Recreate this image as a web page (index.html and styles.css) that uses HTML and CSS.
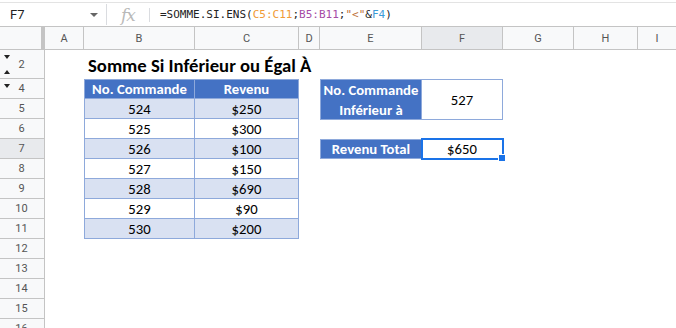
FILE: index.html
```html
<!DOCTYPE html>
<html lang="fr">
<head>
  <meta charset="UTF-8">
  <title>Somme Si Inférieur ou Égal À</title>
  <link rel="stylesheet" href="styles.css">
</head>
<body>
  <div class="toolbar">
    <div class="namebox">F7</div>
    <span class="caret"></span>
    <span class="sep tall"></span>
    <span class="fx">fx</span>
    <span class="sep"></span>
    <div class="formula">=SOMME.SI.ENS(<span class="r1">C5:C11</span>;<span class="r2">B5:B11</span>;<span class="str">"&lt;"</span>&amp;<span class="r3">F4</span>)</div>
  </div>

  <div class="sheet">
    <!-- column headers -->
    <div class="corner"></div>
    <div class="colhead">A</div>
    <div class="colhead">B</div>
    <div class="colhead">C</div>
    <div class="colhead">D</div>
    <div class="colhead">E</div>
    <div class="colhead active">F</div>
    <div class="colhead">G</div>
    <div class="colhead">H</div>
    <div class="colhead last">I</div>

    <!-- row 2 -->
    <div class="rowhead"><span class="arrow down top"></span>2<span class="arrow up bottom"></span></div>
    <div class="cell"></div>
    <div class="cell title">Somme Si Inférieur ou Égal À</div>
    <div class="cell"></div><div class="cell"></div><div class="cell"></div>
    <div class="cell"></div><div class="cell"></div><div class="cell"></div><div class="cell"></div>

    <!-- row 4 -->
    <div class="rowhead"><span class="arrow down top"></span>4</div>
    <div class="cell"></div>
    <div class="cell th first top">No. Commande</div>
    <div class="cell th top">Revenu</div>
    <div class="cell"></div>
    <div class="cell th box merged">No. Commande<br>Inférieur à</div>
    <div class="cell box merged value">527</div>
    <div class="cell"></div><div class="cell"></div><div class="cell"></div>

    <!-- row 5 -->
    <div class="rowhead">5</div>
    <div class="cell"></div>
    <div class="cell td first alt">524</div>
    <div class="cell td alt">$250</div>
    <div class="cell"></div>
    <div class="cell"></div><div class="cell"></div><div class="cell"></div>

    <!-- row 6 -->
    <div class="rowhead">6</div>
    <div class="cell"></div>
    <div class="cell td first">525</div>
    <div class="cell td">$300</div>
    <div class="cell"></div><div class="cell"></div><div class="cell"></div>
    <div class="cell"></div><div class="cell"></div><div class="cell"></div>

    <!-- row 7 -->
    <div class="rowhead active">7</div>
    <div class="cell"></div>
    <div class="cell td first alt">526</div>
    <div class="cell td alt">$100</div>
    <div class="cell"></div>
    <div class="cell th box">Revenu Total</div>
    <div class="cell box value selected">$650</div>
    <div class="cell"></div><div class="cell"></div><div class="cell"></div>

    <!-- row 8 -->
    <div class="rowhead">8</div>
    <div class="cell"></div>
    <div class="cell td first">527</div>
    <div class="cell td">$150</div>
    <div class="cell"></div><div class="cell"></div><div class="cell"></div>
    <div class="cell"></div><div class="cell"></div><div class="cell"></div>

    <!-- row 9 -->
    <div class="rowhead">9</div>
    <div class="cell"></div>
    <div class="cell td first alt">528</div>
    <div class="cell td alt">$690</div>
    <div class="cell"></div><div class="cell"></div><div class="cell"></div>
    <div class="cell"></div><div class="cell"></div><div class="cell"></div>

    <!-- row 10 -->
    <div class="rowhead">10</div>
    <div class="cell"></div>
    <div class="cell td first">529</div>
    <div class="cell td">$90</div>
    <div class="cell"></div><div class="cell"></div><div class="cell"></div>
    <div class="cell"></div><div class="cell"></div><div class="cell"></div>

    <!-- row 11 -->
    <div class="rowhead">11</div>
    <div class="cell"></div>
    <div class="cell td first alt">530</div>
    <div class="cell td alt">$200</div>
    <div class="cell"></div><div class="cell"></div><div class="cell"></div>
    <div class="cell"></div><div class="cell"></div><div class="cell"></div>

    <div class="rowhead">12</div><div class="blank"></div>
    <div class="rowhead">13</div><div class="blank"></div>
    <div class="rowhead">14</div><div class="blank"></div>
    <div class="rowhead">15</div><div class="blank"></div>
    <div class="rowhead">16</div><div class="blank"></div>
  </div>
</body>
</html>
```

FILE: styles.css
```css
body {
  margin: 0;
  background: #fff;
  font-family: Roboto, Arial, sans-serif;
  overflow: hidden;
}
.toolbar {
  display: flex;
  align-items: center;
  height: 23px;
  margin-top: 2px;
  border-top: 1px solid #e3e3e3;
}
.namebox {
  width: 80px;
  padding-left: 10px;
  font-size: 13px;
  color: #222;
}
.caret {
  width: 0;
  height: 0;
  border-left: 4px solid transparent;
  border-right: 4px solid transparent;
  border-top: 4px solid #666;
  margin-left: 0;
  margin-right: 8px;
}
.sep {
  width: 1px;
  height: 14px;
  background: #dadce0;
}
.sep.tall {
  height: 21px;
}
.fx {
  width: 42px;
  text-align: center;
  font-family: "DejaVu Serif", serif;
  font-style: italic;
  font-size: 17px;
  color: #b9b9b9;
  letter-spacing: -1px;
}
.formula {
  padding-left: 10px;
  font-family: "DejaVu Sans Mono", monospace;
  font-size: 11px;
  color: #222;
}
.r1 { color: #f09a36; }
.r2 { color: #a64ca6; }
.str { color: #c0713a; }
.r3 { color: #3b9bd8; }

.sheet {
  display: grid;
  grid-template-columns: 45px 39px 111px 104px 21px 102px 81px 71px 64px 1fr;
  grid-template-rows: 24px 29px repeat(14, 20px);
}
.corner {
  background: #f8f9fa;
  border-top: 1px solid #c4c4c4;
  border-bottom: 1px solid #c4c4c4;
  border-right: 4px solid #c4c4c4;
}
.colhead {
  display: flex;
  align-items: center;
  justify-content: center;
  background: #f8f9fa;
  border-top: 1px solid #c4c4c4;
  border-bottom: 1px solid #c4c4c4;
  border-right: 1px solid #c4c4c4;
  font-size: 11px;
  color: #555;
}
.colhead.last {
  border-right: none;
}
.colhead.active,
.rowhead.active {
  background: #e8eaed;
}
.rowhead {
  position: relative;
  display: flex;
  align-items: center;
  justify-content: center;
  padding-right: 1px;
  background: #f8f9fa;
  border-right: 1px solid #c4c4c4;
  border-bottom: 1px solid #c4c4c4;
  font-size: 11px;
  color: #555;
}
.arrow {
  position: absolute;
  left: 4px;
  width: 0;
  height: 0;
  border-left: 3px solid transparent;
  border-right: 3px solid transparent;
}
.arrow.down {
  border-top: 4px solid #222;
}
.arrow.up {
  border-bottom: 4px solid #222;
}
.arrow.top { top: 5px; }
.arrow.bottom { bottom: 4px; }

.blank {
  grid-column: 2 / -1;
}
.cell {
  display: flex;
  align-items: center;
  justify-content: center;
  font-family: Carlito, Lato, "Liberation Sans", sans-serif;
  font-size: 14.7px;
  color: #000;
  white-space: nowrap;
}
.title {
  justify-content: flex-start;
  align-items: flex-end;
  padding: 0 0 2px 4px;
  font-size: 18.7px;
  font-weight: 700;
  overflow: visible;
}
.th {
  background: #4472c4;
  color: #fff;
  font-weight: 700;
  border-right: 1px solid #8ea9db;
  border-bottom: 1px solid #8ea9db;
}
.td {
  border-right: 1px solid #8ea9db;
  border-bottom: 1px solid #8ea9db;
}
.first {
  border-left: 1px solid #8ea9db;
}
.top {
  border-top: 1px solid #8ea9db;
}
.alt {
  background: #d9e1f2;
}
.box {
  border: 1px solid #8ea9db;
  text-align: center;
  line-height: 20px;
}
.box + .box {
  border-left: none;
}
.merged {
  grid-row: span 2;
  margin-bottom: -1px;
}
.selected {
  position: relative;
  outline: 2px solid #1a73e8;
  outline-offset: -1px;
}
.selected::after {
  content: "";
  position: absolute;
  right: -4px;
  bottom: -4px;
  width: 6px;
  height: 6px;
  background: #1a73e8;
  border: 1px solid #fff;
}
```
